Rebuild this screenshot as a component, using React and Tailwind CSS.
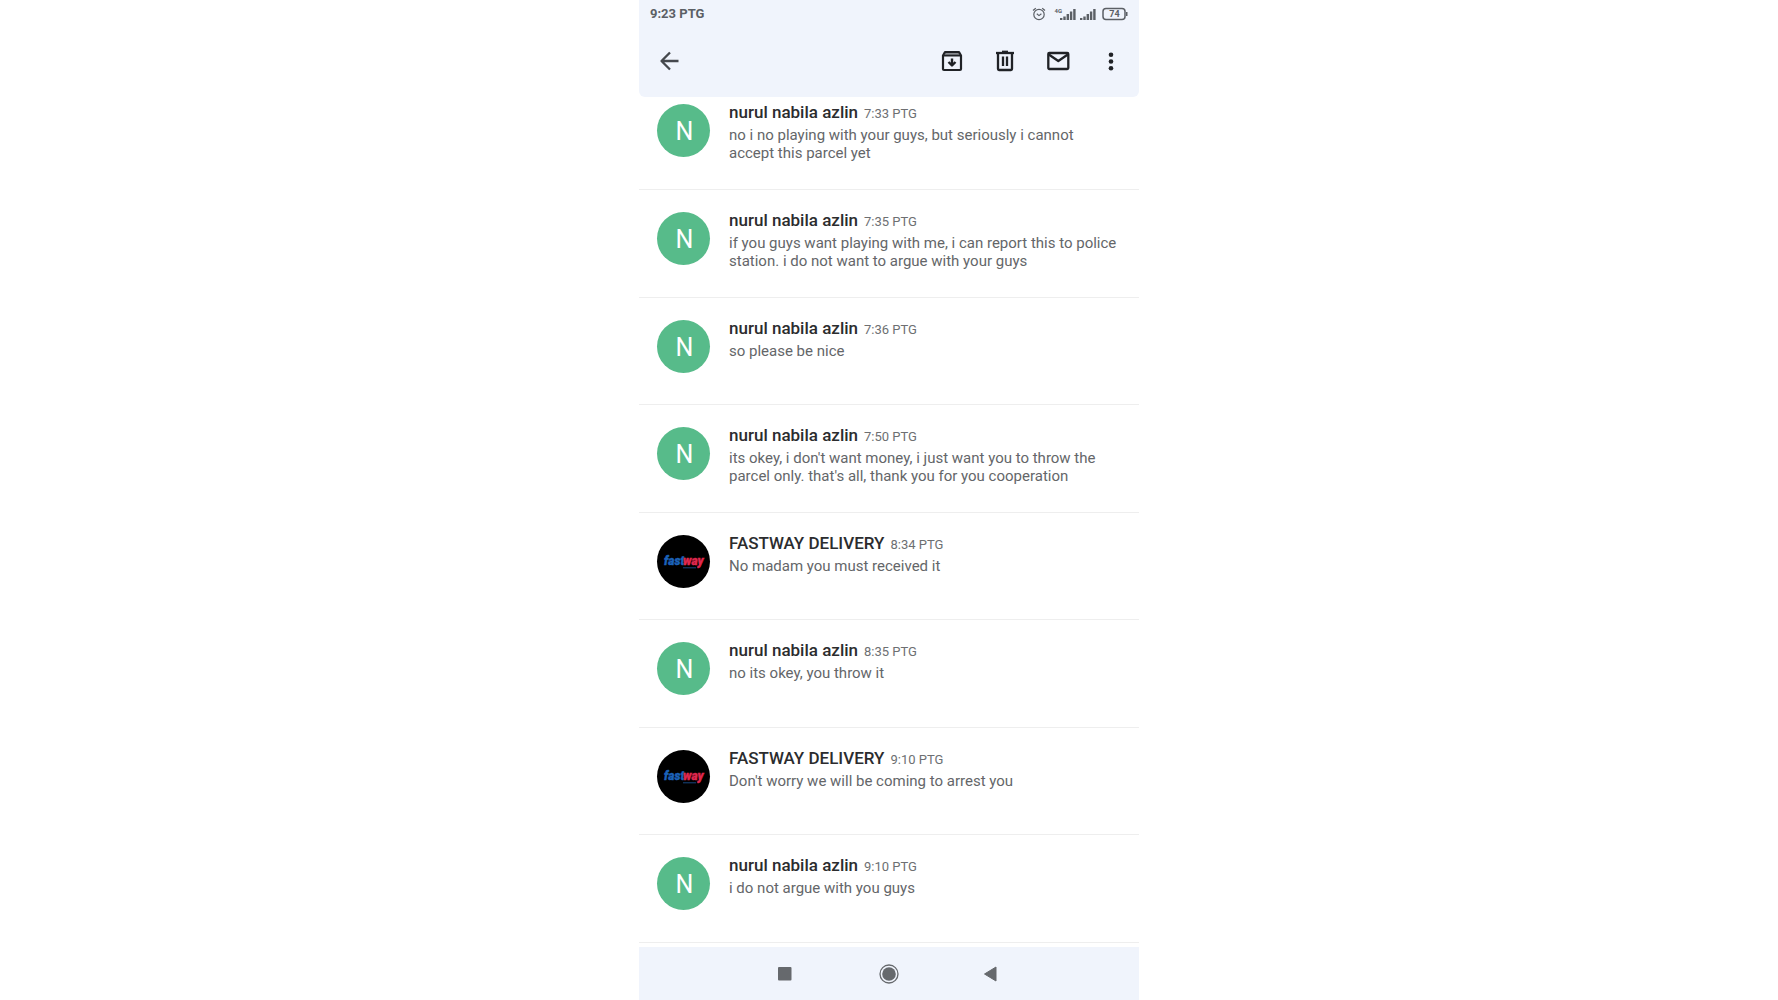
import React from 'react';

const messages = [
    { id: 1, sender: 'nurul nabila azlin', time: '7:33 PTG', text: 'no i no playing with your guys, but seriously i cannot\naccept this parcel yet' },
    { id: 2, sender: 'nurul nabila azlin', time: '7:35 PTG', text: 'if you guys want playing with me, i can report this to police\nstation. i do not want to argue with your guys' },
    { id: 3, sender: 'nurul nabila azlin', time: '7:36 PTG', text: 'so please be nice' },
    { id: 4, sender: 'nurul nabila azlin', time: '7:50 PTG', text: "its okey, i don't want money, i just want you to throw the\nparcel only. that's all, thank you for you cooperation" },
    { id: 5, sender: 'FASTWAY DELIVERY', time: '8:34 PTG', text: 'No madam you must received it', brand: true },
    { id: 6, sender: 'nurul nabila azlin', time: '8:35 PTG', text: 'no its okey, you throw it' },
    { id: 7, sender: 'FASTWAY DELIVERY', time: '9:10 PTG', text: "Don't worry we will be coming to arrest you", brand: true },
    { id: 8, sender: 'nurul nabila azlin', time: '9:10 PTG', text: 'i do not argue with you guys' },
];

function BackIcon() {
    return (
        <svg width="24" height="24" viewBox="0 0 24 24" fill="none" stroke="currentColor" strokeWidth="2.300" strokeLinejoin="round">
            <path d="M21.500 12H4.500M13 3.500L4.500 12l8.500 8.500" />
        </svg>
    );
}

function ArchiveIcon() {
    return (
        <svg width="24" height="24" viewBox="0 0 24 24" fill="none" stroke="currentColor" strokeWidth="2.200" strokeLinejoin="round">
            <path d="M3 6.500L5 3h14l2 3.500V20a1 1 0 0 1-1 1H4a1 1 0 0 1-1-1z" />
            <path d="M3.500 6.500h17" strokeWidth="2" />
            <path d="M5 4.500h14" strokeOpacity="0.5" />
            <path d="M12 9.500v7M8.500 13l3.500 3.500 3.500-3.500" strokeWidth="2.400" />
        </svg>
    );
}

function TrashIcon() {
    return (
        <svg width="24" height="24" viewBox="0 0 24 24" fill="none" stroke="currentColor" strokeWidth="2.300">
            <path d="M3 4h18" />
            <path d="M9 2.800h6" />
            <path d="M5 4v16a1 1 0 0 0 1 1h12a1 1 0 0 0 1-1V4" />
            <path d="M10 7.500v9.500M14 7.500v9.500" />
        </svg>
    );
}

function MailIcon() {
    return (
        <svg width="24" height="24" viewBox="0 0 24 24" fill="none" stroke="currentColor" strokeWidth="2.300" strokeLinejoin="round">
            <rect x="2.300" y="4" width="20" height="16" rx="1" />
            <path d="M2.800 5.500l9.500 6.500 9.500-6.500" />
        </svg>
    );
}

function MoreIcon() {
    return (
        <svg width="24" height="24" viewBox="0 0 24 24" fill="currentColor">
            <circle cx="12" cy="5.800" r="2.300" />
            <circle cx="12" cy="12.500" r="2.300" />
            <circle cx="12" cy="19.200" r="2.300" />
        </svg>
    );
}

function AlarmIcon() {
    return (
        <svg width="14" height="14" viewBox="0 0 14 14" fill="none" stroke="currentColor" strokeWidth="1.200">
            <circle cx="7" cy="7.500" r="5.200" />
            <path d="M4.800 6.800L7 8.600l2.400-1.900M1 3.500L3.800 1.200M13 3.500l-2.800-2.300" />
        </svg>
    );
}

function SignalBars() {
    return (
        <svg width="16" height="12" viewBox="0 0 16 12" fill="currentColor">
            <path d="M0 10h2.400v2H0zM3.300 8.500h2.400V12H3.300zM6.600 6H9v6H6.600zM9.900 3.500h2.400V12H9.900zM13.200 1h2.400v11h-2.400z" />
        </svg>
    );
}

function StatusBar() {
    return (
        <div className="flex h-[27px] items-center justify-between pr-[11px] pl-[11px] text-[#5b5f65]">
            <span className="text-[13px] font-bold">9:23 PTG</span>
            <div className="flex items-center">
                <AlarmIcon />
                <div className="ml-2 flex items-end">
                    <span className="-mr-0.5 self-start text-[6px] leading-[6px] font-bold">4G</span>
                    <SignalBars />
                </div>
                <div className="ml-1 flex">
                    <SignalBars />
                </div>
                <div className="ml-1.5 flex items-center">
                    <svg width="26" height="14" viewBox="0 0 26 14" role="img" aria-label="Battery 74%">
                        <rect x="1" y="1.500" width="22" height="11" rx="3" fill="none" stroke="currentColor" strokeWidth="1.500" />
                        <path d="M24 5h1.500v4H24z" fill="currentColor" />
                        <text x="12.500" y="10.300" textAnchor="middle" fontSize="9" fontWeight="700" fill="currentColor">74</text>
                    </svg>
                </div>
            </div>
        </div>
    );
}

function Toolbar() {
    return (
        <div className="flex h-[70px] items-center justify-between pr-4 pb-0.5 pl-[18px] text-[#202226]">
            <button aria-label="Back" className="text-[#45484d]"><BackIcon /></button>
            <div className="flex items-center gap-[29px]">
                <button aria-label="Archive"><ArchiveIcon /></button>
                <button aria-label="Delete"><TrashIcon /></button>
                <button aria-label="Mark as unread"><MailIcon /></button>
                <button aria-label="More options"><MoreIcon /></button>
            </div>
        </div>
    );
}

function FastwayLogo() {
    return (
        <svg width="53" height="53" viewBox="0 0 53 53" className="shrink-0 rounded-full bg-black" role="img" aria-label="Fastway">
            <g fontFamily="Roboto, sans-serif" fontSize="12" fontWeight="900" fontStyle="italic" strokeWidth="0.400">
                <text x="7" y="30" fill="#1c62b8" stroke="#1c62b8">fast</text>
                <text x="26" y="30" fill="#e0284f" stroke="#e0284f">way</text>
            </g>
            <path d="M26 32.800h13" stroke="#17477f" strokeWidth="1" />
        </svg>
    );
}

function Message({ message, first }) {
    return (
        <li className={`flex gap-[19px] border-b border-[#eeeeee] pl-[18px] ${first ? 'h-[93px] shrink-0 pt-[7px]' : 'shrink-0 grow basis-[107px] pt-[22px]'}`}>
            {message.brand ? (
                <FastwayLogo />
            ) : (
                <span className="flex h-[53px] w-[53px] shrink-0 items-center justify-center rounded-full bg-[#57bb8a] pt-0.5 pl-0.5 text-[25px] leading-none text-white">N</span>
            )}
            <div>
                <h2 className="flex items-baseline gap-1.5 text-[17px] leading-[17px] font-medium text-[#2b2c2e]">
                    {message.sender}
                    <time className="text-[13px] font-normal text-[#6d6f72]">{message.time}</time>
                </h2>
                <p className="pt-1 text-[15px] leading-[18px] whitespace-pre-line text-[#646669]">{message.text}</p>
            </div>
        </li>
    );
}

function NavigationBar() {
    return (
        <nav className="flex h-[53px] shrink-0 items-center justify-center gap-[79px] bg-[#f0f4fc] text-[#66696d]">
            <button aria-label="Recent apps">
                <svg width="24" height="24" viewBox="0 0 24 24" fill="currentColor"><rect x="4" y="5" width="13.500" height="13.500" rx="1" /></svg>
            </button>
            <button aria-label="Home">
                <svg width="24" height="24" viewBox="0 0 24 24" fill="currentColor">
                    <circle cx="12" cy="12" r="9" fill="none" stroke="currentColor" strokeWidth="1.300" />
                    <circle cx="12" cy="12" r="6.800" />
                </svg>
            </button>
            <button aria-label="Go back">
                <svg width="24" height="24" viewBox="0 0 24 24" fill="currentColor" stroke="currentColor" strokeLinejoin="round"><path d="M4.500 12l11.500-7v14z" /></svg>
            </button>
        </nav>
    );
}

export default function App() {
    return (
        <div className="min-h-screen bg-white font-[Roboto,sans-serif]">
            <main className="mx-auto flex min-h-screen w-full max-w-[500px] flex-col bg-white">
                <header className="rounded-b-md bg-[#f0f4fc]">
                    <StatusBar />
                    <Toolbar />
                </header>
                <ul className="mb-1 flex flex-1 flex-col">
                    {messages.map((message, index) => (
                        <Message key={message.id} message={message} first={index === 0} />
                    ))}
                </ul>
                <NavigationBar />
            </main>
        </div>
    );
}
